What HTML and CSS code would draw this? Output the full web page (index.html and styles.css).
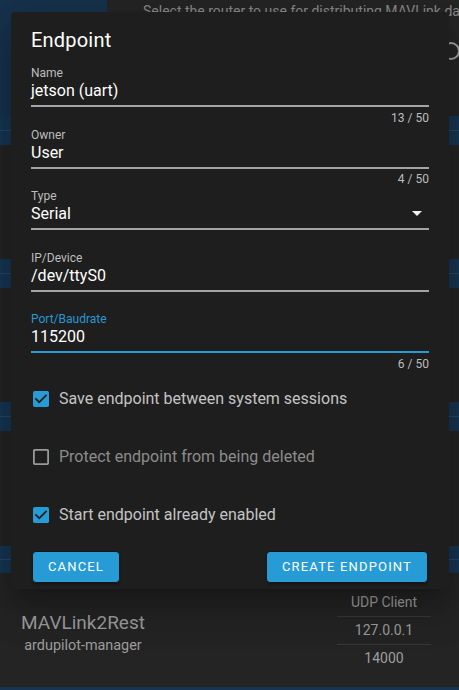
FILE: index.html
```html
<!DOCTYPE html>
<html lang="en">
<head>
<meta charset="utf-8">
<title>Endpoint</title>
<link rel="stylesheet" href="styles.css">
</head>
<body>
<div class="page">
  <header class="top">
    <div class="sidebar"></div>
    <div class="intro">
      <p class="desc">Select the router to use for distributing MAVLink data</p>
      <div class="router-row">
        <svg class="radio" width="20" height="20" viewBox="0 0 20 20"><circle cx="10" cy="10" r="8" fill="none" stroke="#a0a0a0" stroke-width="2"/></svg>
      </div>
    </div>
  </header>
  <div class="band"><div class="band-line"></div></div>
  <div class="gap"></div>
  <div class="band"><div class="band-line"></div></div>
  <div class="gap"></div>
  <div class="band"><div class="band-line"></div></div>
  <div class="gap gap-tall"></div>
  <div class="band band-short"><div class="band-line"></div></div>
  <div class="endpoint-row">
    <div class="ep-name">
      <div class="ep-title">MAVLink2Rest</div>
      <div class="ep-owner">ardupilot-manager</div>
    </div>
    <div class="ep-info">
      <div class="ep-cell">UDP Client</div>
      <div class="ep-cell">127.0.0.1</div>
      <div class="ep-cell">14000</div>
    </div>
  </div>
  <div class="footer-line"></div>
</div>

<div class="dialog">
  <h2 class="dialog-title">Endpoint</h2>
  <div class="fields">
    <div class="field">
      <label class="field-label">Name</label>
      <div class="field-input">jetson (uart)</div>
      <div class="field-details">13 / 50</div>
    </div>
    <div class="field">
      <label class="field-label">Owner</label>
      <div class="field-input">User</div>
      <div class="field-details">4 / 50</div>
    </div>
    <div class="field">
      <label class="field-label">Type</label>
      <div class="field-input select">
        <span>Serial</span>
        <svg class="menu-down" width="24" height="24" viewBox="0 0 24 24"><path d="M7,10L12,15L17,10H7Z" fill="#f0f0f0"/></svg>
      </div>
      <div class="field-details"></div>
    </div>
    <div class="field">
      <label class="field-label">IP/Device</label>
      <div class="field-input">/dev/ttyS0</div>
      <div class="field-details"></div>
    </div>
    <div class="field focused">
      <label class="field-label">Port/Baudrate</label>
      <div class="field-input">115200</div>
      <div class="field-details">6 / 50</div>
    </div>
  </div>
  <div class="checks">
    <div class="check">
      <svg class="box" width="16" height="16" viewBox="3 3 18 18"><rect x="3" y="3" width="18" height="18" rx="2" fill="#269bd5"/><path d="M10,17L5,12L6.41,10.58L10,14.17L17.59,6.58L19,8Z" fill="#1e1e1e"/></svg>
      <span class="check-label">Save endpoint between system sessions</span>
    </div>
    <div class="check off">
      <svg class="box" width="16" height="16" viewBox="3 3 18 18"><path d="M19,3H5C3.89,3 3,3.89 3,5V19A2,2 0 0,0 5,21H19A2,2 0 0,0 21,19V5C21,3.89 20.1,3 19,3M19,5V19H5V5H19Z" fill="#9a9a9a"/></svg>
      <span class="check-label">Protect endpoint from being deleted</span>
    </div>
    <div class="check">
      <svg class="box" width="16" height="16" viewBox="3 3 18 18"><rect x="3" y="3" width="18" height="18" rx="2" fill="#269bd5"/><path d="M10,17L5,12L6.41,10.58L10,14.17L17.59,6.58L19,8Z" fill="#1e1e1e"/></svg>
      <span class="check-label">Start endpoint already enabled</span>
    </div>
  </div>
  <div class="actions">
    <button class="btn">Cancel</button>
    <button class="btn">Create endpoint</button>
  </div>
</div>
</body>
</html>
```

FILE: styles.css
```css
* { box-sizing: border-box; }

html, body {
  margin: 0;
  padding: 0;
}

body {
  width: 459px;
  height: 690px;
  overflow: hidden;
  background: #242424;
  font-family: Roboto, "Liberation Sans", sans-serif;
  position: relative;
}

.page {
  display: flex;
  flex-direction: column;
  width: 459px;
}

.top {
  display: flex;
  height: 116px;
}

.sidebar {
  width: 107px;
  flex-shrink: 0;
  background: #17324d;
}

.intro {
  flex: 1;
  min-width: 0;
  display: flex;
  flex-direction: column;
  background: #252525;
}

.desc {
  margin: 0;
  padding-left: 36px;
  padding-top: 1px;
  font-size: 14px;
  line-height: 20px;
  color: #8a8a8a;
  white-space: nowrap;
  overflow: hidden;
}

.router-row {
  display: flex;
  justify-content: flex-end;
  padding-top: 20px;
  margin-right: -2px;
}

.band {
  height: 29px;
  background: #173552;
  display: flex;
  flex-direction: column;
  justify-content: center;
}

.band-short { height: 27px; }

.band-line {
  height: 1px;
  background: #22476a;
}

.gap { height: 114px; }
.gap-tall { height: 115px; }

.endpoint-row {
  display: flex;
  height: 114px;
  color: #9e9e9e;
}

.ep-name {
  width: 166px;
  text-align: center;
  padding-top: 37.5px;
}

.ep-title {
  font-size: 19px;
  line-height: 24px;
}

.ep-owner {
  font-size: 14.4px;
  line-height: 20px;
  margin-top: 1.3px;
}

.ep-info {
  margin-left: auto;
  margin-right: 28px;
  width: 94px;
  padding-top: 15px;
  display: flex;
  flex-direction: column;
}

.ep-cell {
  height: 28px;
  font-size: 14px;
  line-height: 28px;
  text-align: center;
}

.ep-cell + .ep-cell {
  border-top: 1px solid #383838;
  line-height: 27px;
}

.footer-line {
  height: 3px;
  background: #173552;
}

/* Dialog overlay */
.dialog {
  position: absolute;
  left: 11px;
  top: 12px;
  width: 438px;
  background: #1e1e1e;
  border-radius: 4px;
  box-shadow: 0 11px 15px -7px rgba(0,0,0,.2), 0 24px 38px 3px rgba(0,0,0,.14), 0 9px 46px 8px rgba(0,0,0,.12);
  color: #fff;
}

.dialog-title {
  margin: 0;
  padding: 12.4px 20px 0;
  font-size: 20px;
  line-height: 32px;
  font-weight: 400;
  letter-spacing: 0.2px;
}

.fields {
  padding: 8.8px 20px 0;
}

.field {
  display: flex;
  flex-direction: column;
  margin-bottom: 2.1px;
}

.field-label {
  font-size: 12px;
  line-height: 16px;
  color: #bdbdbd;
}

.field-input {
  font-size: 16px;
  line-height: 20px;
  padding-bottom: 4px;
  border-bottom: 2px solid #a4a4a4;
  color: #fff;
}

.field-input.select {
  display: flex;
  align-items: center;
  justify-content: space-between;
  height: 26px;
}

.field-input.select .menu-down {
  margin-top: -4px;
  margin-bottom: -2px;
}

.field-details {
  margin-top: 3.4px;
  height: 14px;
  font-size: 12px;
  line-height: 14px;
  text-align: right;
  color: #bdbdbd;
}

.focused .field-label { color: #2a97d2; }
.focused .field-input { border-bottom-color: #269bd5; }

.checks {
  display: flex;
  flex-direction: column;
  padding: 0 20px;
}

.check {
  display: flex;
  align-items: center;
  height: 24px;
  margin: 14px 0 20px 2.3px;
  gap: 9.7px;
}

.check-label {
  font-size: 16px;
  line-height: 24px;
  color: #c4c4c4;
}

.check.off .check-label { color: #8c8c8c; }

.actions {
  display: flex;
  justify-content: space-between;
  padding: 4.6px 21px 6.5px 21px;
}

.btn {
  height: 31.5px;
  padding: 0 15px;
  border: 1px solid #141414;
  border-radius: 4px;
  background: #269bd5;
  color: #fff;
  font-family: Roboto, "Liberation Sans", sans-serif;
  font-size: 13px;
  font-weight: 400;
  letter-spacing: 0.0892857em;
  text-transform: uppercase;
  box-shadow: 0 2px 2px rgba(0,0,0,.25);
}
```
